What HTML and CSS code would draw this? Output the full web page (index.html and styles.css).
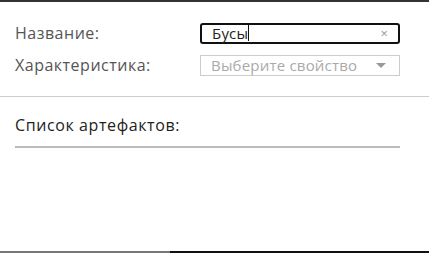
FILE: index.html
```html
<!DOCTYPE html>
<html lang="ru">
<head>
  <meta charset="UTF-8" />
  <title>Артефакты</title>
  <link rel="stylesheet" href="styles.css">
</head>
<body>
  <div class="panel">
    <form class="filters">
      <div class="row">
        <label>Название:</label>
        <div class="field active">
          <span class="value">Бусы</span><span class="caret"></span>
          <span class="clear">×</span>
        </div>
      </div>
      <div class="row">
        <label>Характеристика:</label>
        <div class="field select">
          <span class="placeholder">Выберите свойство</span>
          <span class="arrow"></span>
        </div>
      </div>
    </form>

    <div class="list">
      <h3>Список артефактов:</h3>
      <div class="underline"></div>
    </div>
  </div>
  <div class="bottom">
    <div class="bottomLeft"></div>
    <div class="bottomRight"></div>
  </div>
</body>
</html>
```

FILE: styles.css
```css
body {
  margin: 0;
  font-family: "Open Sans", sans-serif;
  background: #fff;
}
.panel {
  border-top: 2px solid #333;
  height: 249px;
}
.filters {
  padding: 20px 29px 20px 15px;
  border-bottom: 1px solid #ccc;
}
.row {
  display: flex;
  justify-content: space-between;
  align-items: center;
  margin-bottom: 10px;
}
.row:last-child {
  margin-bottom: 0;
}
label {
  font-size: 16px;
  letter-spacing: 0.5px;
  color: #555;
}
.field {
  width: 200px;
  height: 21px;
  box-sizing: border-box;
  display: flex;
  align-items: center;
  padding: 0 10px;
}
.field.active {
  border: 2px solid #111;
  border-radius: 3px;
}
.value {
  font-size: 15px;
  letter-spacing: 0.2px;
  color: #222;
}
.caret {
  width: 1px;
  height: 16px;
  background: #111;
}
.clear {
  margin-left: auto;
  color: #999;
  font-size: 13px;
}
.field.select {
  border: 1px solid #ccc;
}
.placeholder {
  flex: 1;
  font-size: 15px;
  letter-spacing: 0.2px;
  color: #aaa;
}
.arrow {
  width: 0;
  height: 0;
  border-left: 5px solid transparent;
  border-right: 5px solid transparent;
  border-top: 5px solid #999;
  margin-right: 3px;
}
.list {
  padding: 17px 29px 0 15px;
}
.list h3 {
  margin: 0;
  font-weight: normal;
  font-size: 16px;
  letter-spacing: 0.6px;
  color: #222;
}
.underline {
  margin-top: 10px;
  height: 2px;
  background: #bbb;
}
.bottom {
  display: flex;
  height: 2px;
}
.bottomLeft {
  width: 170px;
  background: #777;
}
.bottomRight {
  flex: 1;
  background: #111;
}
```
